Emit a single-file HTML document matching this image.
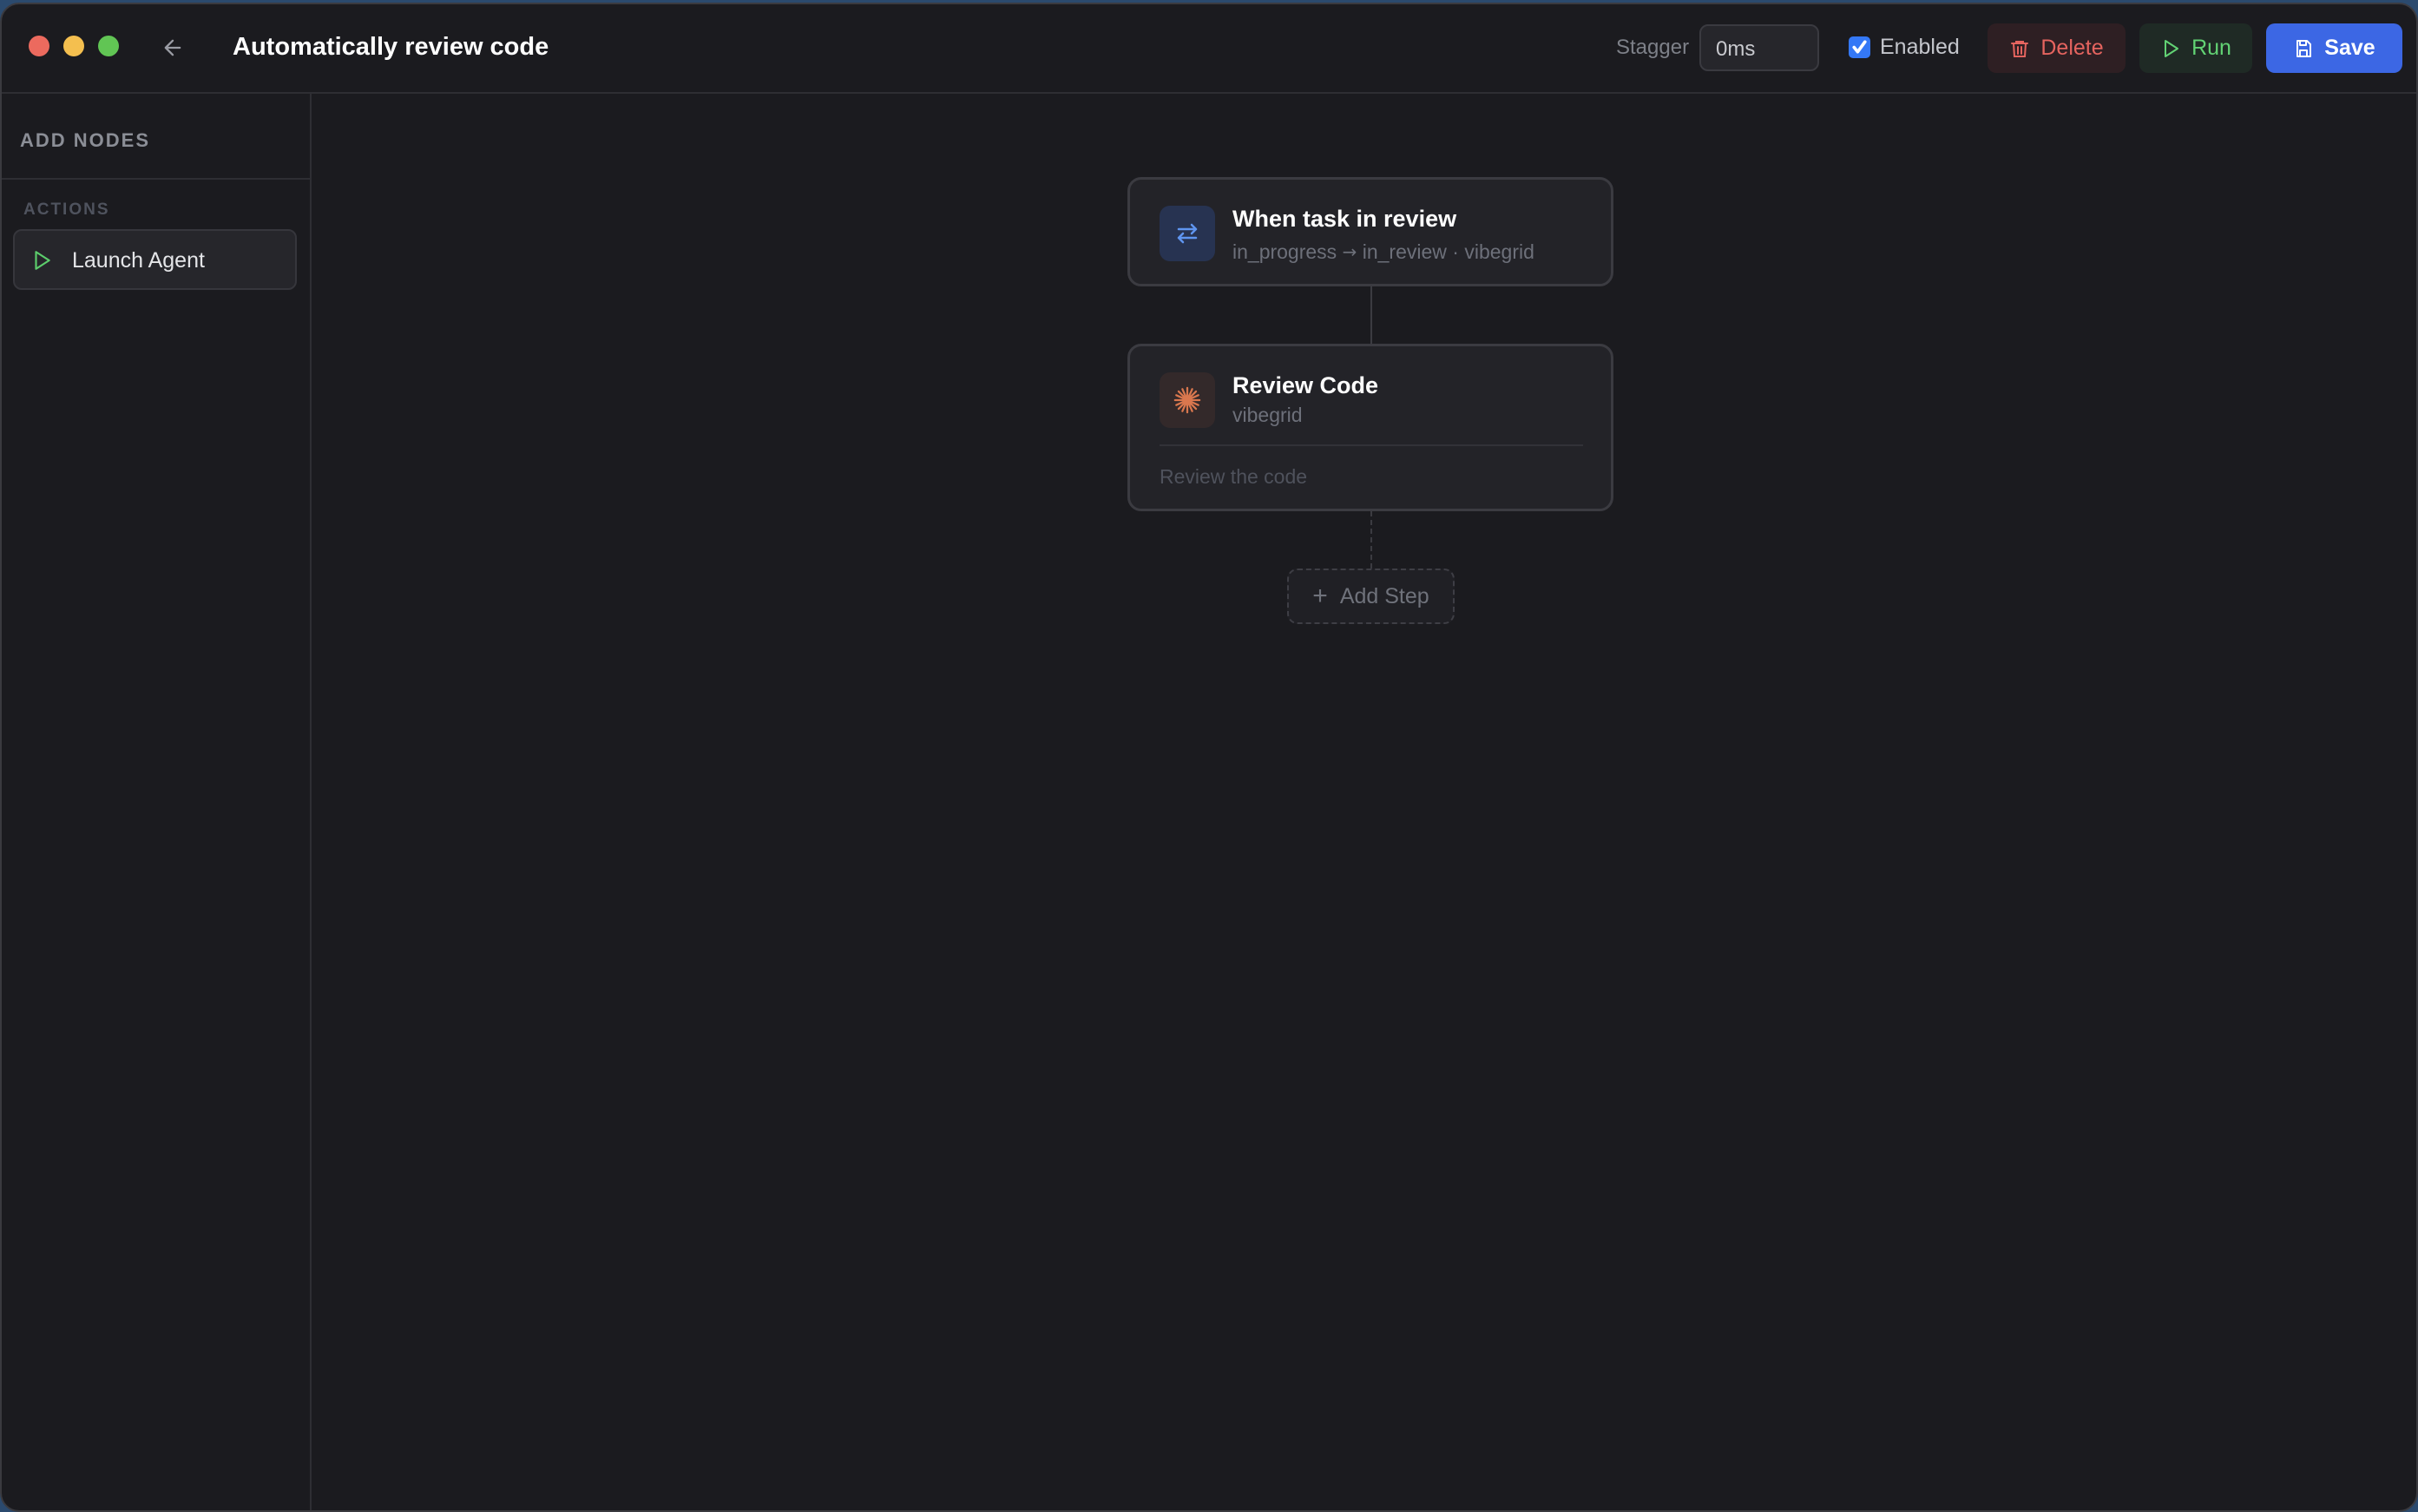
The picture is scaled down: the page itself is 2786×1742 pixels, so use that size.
<!DOCTYPE html>
<html><head><meta charset="utf-8"><style>
*{box-sizing:border-box;margin:0;padding:0}
body{width:2786px;height:1742px;background:#2b4a6e;font-family:"Liberation Sans",Arial,sans-serif;overflow:hidden;position:relative}
.win{position:absolute;left:0;top:3px;width:2786px;height:1739px;background:#1b1b1f;border-radius:22px;border:2px solid #3a3a3f;overflow:hidden}
.abs{position:absolute}
.dot{position:absolute;width:24px;height:24px;border-radius:50%;top:36px}
.hdr{position:absolute;left:0;top:0;right:0;height:103px;border-bottom:2px solid #2e2e33}
.btn{position:absolute;top:22px;height:57px;border-radius:10px;display:flex;align-items:center;justify-content:center;font-size:25px;gap:12px}
.node{position:absolute;left:1297px;width:560px;background:#232328;border:3px solid #3b3b41;border-radius:16px}
.ic{position:absolute;left:34px;width:64px;height:64px;border-radius:12px;display:flex;align-items:center;justify-content:center}
.t{position:absolute;left:118px;color:#fff;font-size:27px;font-weight:bold}
.s{position:absolute;left:118px;color:#6d707a;font-size:23px}
</style></head><body>
<div class="win">
 <div class="hdr">
  <div class="dot" style="left:31px;background:#ec6a5e"></div>
  <div class="dot" style="left:71px;background:#f4bf4f"></div>
  <div class="dot" style="left:111px;background:#61c554"></div>
  <svg class="abs" style="left:183px;top:36px" width="28" height="28" viewBox="0 0 24 24" fill="none" stroke="#9a9ca4" stroke-width="2" stroke-linecap="round" stroke-linejoin="round"><path d="M19 12H5M12 19l-7-7 7-7"/></svg>
  <div class="abs" style="left:266px;top:33px;color:#fff;font-size:29px;font-weight:bold">Automatically review code</div>
  <div class="abs" style="left:1860px;top:36px;color:#7d8088;font-size:24px">Stagger</div>
  <div class="abs" style="left:1956px;top:23px;width:138px;height:54px;border:2px solid #3a3a40;border-radius:10px;background:#26262b;color:#c8c9ce;font-size:24px;padding:13px 0 0 17px">0ms</div>
  <div class="abs" style="left:2128px;top:37px;width:25px;height:25px;background:#3478f6;border-radius:5px"><svg width="25" height="25" viewBox="0 0 24 24" fill="none" stroke="#fff" stroke-width="3.5" stroke-linecap="round" stroke-linejoin="round"><path d="M6 12l4 5 8-11"/></svg></div>
  <div class="abs" style="left:2164px;top:35px;color:#c4c6cc;font-size:25px">Enabled</div>
  <div class="btn" style="left:2288px;width:159px;background:#2e1f23;color:#e5645f"><svg width="24" height="26" viewBox="0 0 24 24" fill="none" stroke="#e5645f" stroke-width="2" stroke-linecap="round"><path d="M3 6h18M8 6V4h8v2M5 6l1 15h12l1-15M10 10v8M14 10v8"/></svg>Delete</div>
  <div class="btn" style="left:2463px;width:130px;background:#1f2a25;color:#62d274"><svg width="24" height="26" viewBox="0 0 24 24" fill="none" stroke="#62d274" stroke-width="2" stroke-linejoin="round"><path d="M6 3l14 9-14 9z"/></svg>Run</div>
  <div class="btn" style="left:2609px;width:157px;background:#3c67e4;color:#fff;font-weight:bold"><svg width="24" height="26" viewBox="0 0 24 24" fill="none" stroke="#fff" stroke-width="2" stroke-linejoin="round"><path d="M5 3h11l4 4v14H5zM8 3v5h7V3M8 21v-7h8v7"/></svg>Save</div>
 </div>
 <div class="abs" style="left:0;top:103px;width:357px;bottom:0;border-right:2px solid #2e2e33">
  <div class="abs" style="left:21px;top:41px;color:#8b8e96;font-size:22px;letter-spacing:2px;font-weight:bold">ADD NODES</div>
  <div class="abs" style="left:0;right:0;top:97px;border-top:2px solid #2e2e33"></div>
  <div class="abs" style="left:25px;top:123px;color:#4f535e;font-size:19px;letter-spacing:2px;font-weight:bold">ACTIONS</div>
  <div class="abs" style="left:13px;top:156px;width:327px;height:70px;background:#26262b;border:2px solid #36363c;border-radius:10px">
   <svg class="abs" style="left:18px;top:20px" width="26" height="28" viewBox="0 0 24 24" fill="none" stroke="#5ccd6c" stroke-width="2" stroke-linejoin="round"><path d="M6 3l14 9-14 9z"/></svg>
   <div class="abs" style="left:66px;top:20px;color:#e4e5e8;font-size:25px">Launch Agent</div>
  </div>
 </div>
 <div class="node" style="top:199px;height:126px">
  <div class="ic" style="top:30px;background:#273351"><svg width="30" height="30" viewBox="0 0 24 24" fill="none" stroke="#5f95ef" stroke-width="2" stroke-linecap="round" stroke-linejoin="round"><path d="M4 8h16M16 4l4 4-4 4M20 16H4M8 12l-4 4 4 4"/></svg></div>
  <div class="t" style="top:30px">When task in review</div>
  <div class="s" style="top:70px">in_progress <span style="font-family:'DejaVu Sans';font-size:20px;position:relative;top:-1px">→</span> in_review · vibegrid</div>
 </div>
 <div class="abs" style="left:1577px;top:325px;width:2px;height:67px;background:#3b3b41"></div>
 <div class="node" style="top:391px;height:193px">
  <div class="ic" style="top:30px;background:#33292a"><svg width="34" height="34" viewBox="0 0 24 24" stroke="#d9774e" stroke-width="1.6" stroke-linecap="round"><path d="M12 2v20M2 12h20M4.9 4.9l14.2 14.2M19.1 4.9L4.9 19.1M8 3l8 18M16 3L8 21M3 8l18 8M21 8L3 16"/></svg></div>
  <div class="t" style="top:30px">Review Code</div>
  <div class="s" style="top:66px">vibegrid</div>
  <div class="abs" style="left:34px;right:32px;top:113px;border-top:2px solid #323238"></div>
  <div class="abs" style="left:34px;top:137px;color:#4f525c;font-size:23px">Review the code</div>
 </div>
 <div class="abs" style="left:1577px;top:584px;height:66px;border-left:2px dashed #3b3b41"></div>
 <div class="abs" style="left:1481px;top:650px;width:193px;height:64px;border:2px dashed #3e3e45;border-radius:12px;background:#202025;color:#6f727b;font-size:25px;display:flex;align-items:center;justify-content:center;gap:14px"><span style="font-size:30px">+</span>Add Step</div>
</div>
</body></html>
